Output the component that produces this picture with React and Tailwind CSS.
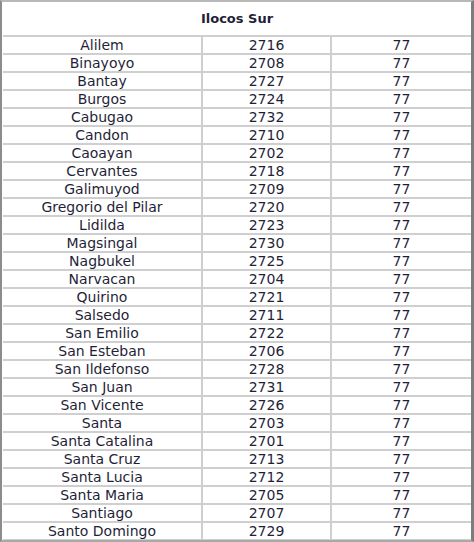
import React from "react";

const rows = [
  ["Alilem", "2716"],
  ["Binayoyo", "2708"],
  ["Bantay", "2727"],
  ["Burgos", "2724"],
  ["Cabugao", "2732"],
  ["Candon", "2710"],
  ["Caoayan", "2702"],
  ["Cervantes", "2718"],
  ["Galimuyod", "2709"],
  ["Gregorio del Pilar", "2720"],
  ["Lidilda", "2723"],
  ["Magsingal", "2730"],
  ["Nagbukel", "2725"],
  ["Narvacan", "2704"],
  ["Quirino", "2721"],
  ["Salsedo", "2711"],
  ["San Emilio", "2722"],
  ["San Esteban", "2706"],
  ["San Ildefonso", "2728"],
  ["San Juan", "2731"],
  ["San Vicente", "2726"],
  ["Santa", "2703"],
  ["Santa Catalina", "2701"],
  ["Santa Cruz", "2713"],
  ["Santa Lucia", "2712"],
  ["Santa Maria", "2705"],
  ["Santiago", "2707"],
  ["Santo Domingo", "2729"],
];

export default function App() {
  return (
    <div
      className="w-[474px] h-[542px] bg-white border-t-2 border-b-2 border-l-2 border-r-[3px] border-t-[#b8b8b8] border-b-[#a8a8a8] border-l-[#8c8c8c] border-r-[#7c7c7c] overflow-hidden text-[#1f1f38]"
      style={{ fontFamily: '"DejaVu Sans", Verdana, sans-serif' }}
    >
      <div className="pl-px">
        <div className="h-[33px] flex items-center justify-center text-[13px] font-bold">
          Ilocos Sur
        </div>
        {rows.map(([name, code]) => (
          <div
            key={name}
            className="grid grid-cols-[200px_129px_1fr] h-[18px] border-t-2 border-[#cfcfcf] text-[14px] leading-[16px]"
          >
            <div className="text-center border-r-2 border-[#cfcfcf]">{name}</div>
            <div className="text-center border-r-2 border-[#cfcfcf]">{code}</div>
            <div className="text-center">77</div>
          </div>
        ))}
        <div className="border-t-2 border-[#cfcfcf]" />
      </div>
    </div>
  );
}
